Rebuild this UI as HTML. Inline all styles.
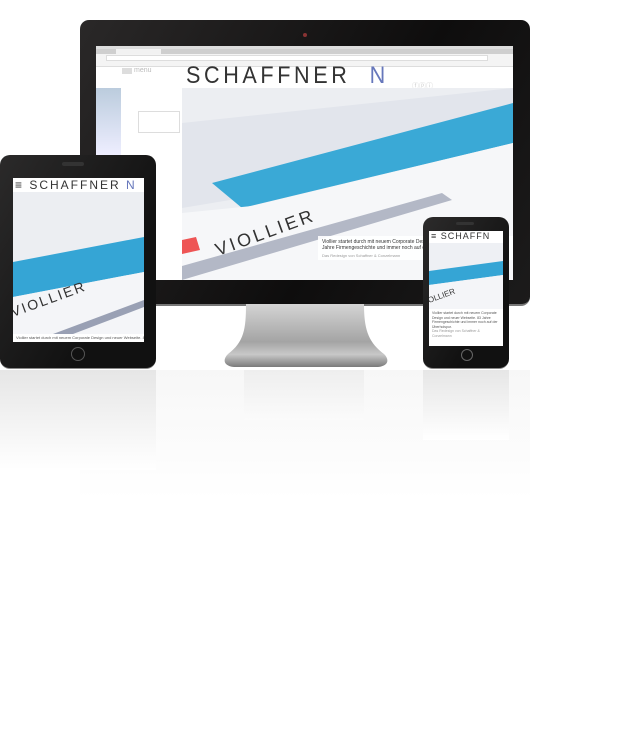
<!DOCTYPE html><html><head><style>
body{margin:0;width:639px;height:735px;background:#fff;position:relative;overflow:hidden;font-family:"Liberation Sans",sans-serif}
.a{position:absolute}
.n{white-space:nowrap}
</style></head><body>
<div class="a" style="left:80px;top:370px;width:450px;height:130px;background:linear-gradient(#f7f7f7,#fff)"></div>
<div class="a" style="left:0;top:370px;width:156px;height:100px;background:linear-gradient(#e6e6e6,#fff)"></div>
<div class="a" style="left:423px;top:370px;width:86px;height:70px;background:linear-gradient(#e6e6e6,#fff)"></div>
<div class="a" style="left:244px;top:370px;width:120px;height:50px;background:linear-gradient(#eee,#fbfbfb)"></div>

<div class="a" style="left:80px;top:20px;width:450px;height:284px;border-radius:9px;background:linear-gradient(120deg,#2a2828,#0e0d0d 60%,#1c1b1b);border-bottom:2px solid #777"></div>
<div class="a" style="left:303px;top:33px;width:4px;height:4px;border-radius:50%;background:#833"></div>
<svg class="a" style="left:218px;top:304px" width="176" height="66"><defs><linearGradient id="g" x1="0" y1="0" x2="0" y2="1"><stop offset="0" stop-color="#d4d4d4"/><stop offset=".6" stop-color="#a4a4a4"/><stop offset=".8" stop-color="#c8c8c8"/><stop offset="1" stop-color="#7a7a7a"/></linearGradient></defs><path d="M28 0H146C146 25 150 38 166 50C172 56 170 62 160 63H16C6 62 4 56 10 50C26 38 28 25 28 0Z" fill="url(#g)"/></svg>
<div class="a" style="left:96px;top:46px;width:417px;height:234px;background:#fff;overflow:hidden">
 <div class="a" style="left:0;top:0;width:417px;height:3px;background:#ddd"></div>
 <div class="a" style="left:0;top:3px;width:417px;height:5px;background:#cfcfcf"></div>
 <div class="a" style="left:20px;top:3px;width:45px;height:5px;background:#f2f2f2"></div>
 <div class="a" style="left:0;top:8px;width:417px;height:12px;background:#f4f4f4;border-bottom:1px solid #ddd"></div>
 <div class="a" style="left:10px;top:9px;width:380px;height:4px;background:#fff;border:1px solid #ddd"></div>
 <div class="a" style="left:26px;top:22px;width:10px;height:6px;background:#ddd"></div>
 <div class="a n" style="left:38px;top:21px;font-size:7px;color:#bbb">menu</div>
 <div class="a n" style="left:90px;top:18px;font-size:24px;line-height:24px;letter-spacing:4px;color:#333;font-weight:100;transform:scaleX(.9);transform-origin:left">SCHAFFNER<span style="color:#67b">&nbsp;&nbsp;N</span></div>
 <div class="a" style="left:316px;top:35px;width:24px;height:7px;color:#ccc;font-size:7px">ⓕⓟⓘ</div>
 <div class="a" style="left:0;top:42px;width:25px;height:67px;background:linear-gradient(#bcd,#eef)"></div>
 <div class="a" style="left:42px;top:65px;width:40px;height:20px;border:1px solid #ddd"></div>
 <svg class="a" style="left:86px;top:42px" width="331" height="192"><rect width="331" height="192" fill="#eceef2"/><polygon points="0,35 331,0 331,25 150,95 0,120" fill="#e2e5ec"/><polygon points="30,95 331,15 331,55 60,120" fill="#3aa9d6"/><polygon points="0,125 70,118 331,55 331,192 0,192" fill="#f6f7f9"/><polygon points="0,178 260,105 270,112 0,192" fill="#b3b8c6"/><text x="36" y="168" transform="rotate(-20 36 168)" font-size="18" fill="#333" letter-spacing="3" font-family="Liberation Sans">VIOLLIER</text><polygon points="0,152 14,149 18,162 0,166" fill="#e55"/><rect x="136" y="148" width="195" height="24" fill="#fff" opacity=".9"/><text x="140" y="155" font-size="5" fill="#333">Viollier startet durch mit neuem Corporate Design u</text><text x="140" y="161" font-size="5" fill="#333">Jahre Firmengeschichte und immer noch auf der Üb</text><text x="140" y="169" font-size="4" fill="#999">Das Redesign von Schaffner &amp; Conzelmann</text></svg>
</div>

<div class="a" style="left:0;top:155px;width:156px;height:213px;border-radius:10px;background:linear-gradient(120deg,#2b2a2a,#111 70%);border-bottom:1px solid #888"></div>
<div class="a" style="left:62px;top:162px;width:22px;height:4px;border-radius:2px;background:#333"></div>
<div class="a" style="left:71px;top:347px;width:14px;height:14px;border-radius:50%;border:1px solid #555;box-sizing:border-box;background:#111"></div>
<div class="a" style="left:13px;top:178px;width:131px;height:164px;background:#fff;overflow:hidden">
 <div class="a n" style="left:2px;top:0;font-size:12px;letter-spacing:2px;color:#333;font-weight:100">≡ SCHAFFNER <span style="color:#67b">N</span></div>
 <svg class="a" style="left:0;top:14px" width="131" height="142"><rect width="131" height="142" fill="#eceef2"/><polygon points="0,70 131,45 131,80 0,105" fill="#35a5d5"/><polygon points="0,105 131,80 131,142 0,142" fill="#f4f5f8"/><text x="0" y="125" transform="rotate(-20 0 125)" font-size="14" fill="#333" letter-spacing="2">VIOLLIER</text><polygon points="40,142 131,108 131,115 60,142" fill="#99a0b4"/></svg>
 <div class="a n" style="left:3px;top:157px;font-size:4px;color:#555">Viollier startet durch mit neuem Corporate Design und neuer Webseite. 83 Jahre</div>
</div>

<div class="a" style="left:423px;top:217px;width:86px;height:151px;border-radius:10px;background:linear-gradient(120deg,#2c2b2b,#111 70%);border-bottom:1px solid #888"></div>
<div class="a" style="left:456px;top:222px;width:18px;height:3px;border-radius:2px;background:#333"></div>
<div class="a" style="left:461px;top:349px;width:12px;height:12px;border-radius:50%;border:1px solid #666;box-sizing:border-box"></div>
<div class="a" style="left:429px;top:231px;width:74px;height:115px;background:#fff;overflow:hidden">
 <div class="a n" style="left:2px;top:0;font-size:9px;letter-spacing:1px;color:#333;font-weight:100">≡ SCHAFFN</div>
 <svg class="a" style="left:0;top:12px" width="74" height="66"><rect width="74" height="66" fill="#eef0f4"/><polygon points="0,28 74,18 74,32 0,42" fill="#35a5d5"/><polygon points="0,42 74,32 74,66 0,66" fill="#f4f5f8"/><text x="0" y="60" transform="rotate(-20 0 60)" font-size="8" fill="#333">OLLIER</text></svg>
 <div class="a" style="left:3px;top:80px;width:68px;font-size:3.5px;line-height:4.5px;color:#555">Viollier startet durch mit neuem Corporate Design und neuer Webseite. 83 Jahre Firmengeschichte und immer noch auf der Überholspur.<br><span style="color:#999">Das Redesign von Schaffner &amp; Conzelmann</span></div>
</div>
</body></html>
